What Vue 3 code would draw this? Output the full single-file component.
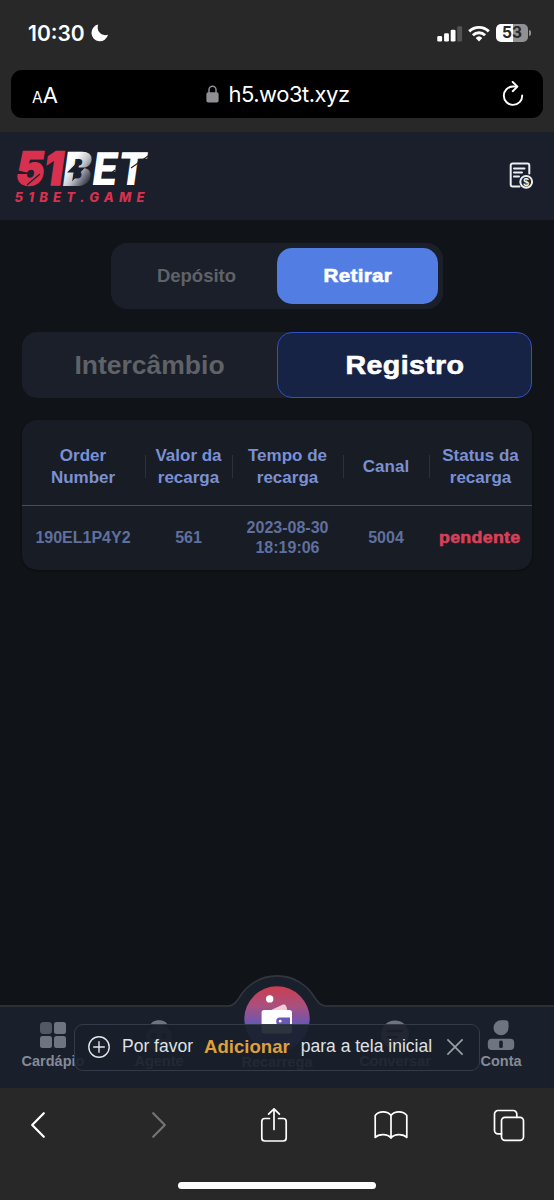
<template>
  <div class="phone">
    <header class="browser-top">
      <div class="status-bar">
        <div class="clock">
          <span>10:30</span>
          <svg width="18" height="18" viewBox="0 0 18 18">
            <path d="M7.2 .6C4.9 6.6 10 12.8 17 10.8A8.4 8.4 0 1 1 7.2 .6Z" fill="#fff" />
          </svg>
        </div>
        <div class="signals">
          <svg width="26" height="17" viewBox="0 0 26 17">
            <rect x="0.3" y="11" width="4.8" height="5.6" rx="1.3" fill="#fff" />
            <rect x="7.1" y="8.3" width="4.8" height="8.3" rx="1.3" fill="#fff" />
            <rect x="13.7" y="4.8" width="4.8" height="11.8" rx="1.3" fill="#fff" />
            <rect x="20.3" y="1.3" width="4.8" height="15.3" rx="1.3" fill="#545454" />
          </svg>
          <svg class="wifi" width="22" height="17" viewBox="0 0 22 17">
            <g fill="none" stroke="#fff" stroke-width="2.9">
              <path d="M1.2 6.4A14 14 0 0 1 20.8 6.4" />
              <path d="M4.9 10.2A8.8 8.8 0 0 1 17.1 10.2" />
            </g>
            <path d="M7.7 12.9A4.8 4.8 0 0 1 14.3 12.9L11 16.5Z" fill="#fff" />
          </svg>
          <div class="battery"><span>53</span></div>
          <i class="battery-tip"></i>
        </div>
      </div>

      <div class="address-bar">
        <div class="text-size"><small>A</small>A</div>
        <div class="url">
          <svg width="13" height="18" viewBox="0 0 13 18">
            <path d="M3 8V4.8a3.5 3.5 0 0 1 7 0V8" fill="none" stroke="#8f8f94" stroke-width="1.5" />
            <rect x="0.4" y="7.3" width="12.2" height="10.3" rx="1.8" fill="#8f8f94" />
          </svg>
          <span>h5.wo3t.xyz</span>
        </div>
        <svg class="reload" width="22" height="26" viewBox="0 0 22 26">
          <g fill="none" stroke="#fff" stroke-width="1.9" stroke-linecap="round" stroke-linejoin="round">
            <path d="M14.6 5.5H11A9.2 9.2 0 1 0 20.2 14.5" />
            <path d="M10.700 1L15.4 5.600L10.7 10.200" />
          </g>
        </svg>
      </div>
    </header>

    <div class="site-header">
      <svg class="logo" width="146" height="80" viewBox="0 -12 146 80">
        <defs>
          <linearGradient id="steel" x1="0.3" y1="0.35" x2="0.75" y2="0.85">
            <stop offset="0" stop-color="#fff" />
            <stop offset="0.45" stop-color="#c3c6cf" />
            <stop offset="1" stop-color="#414553" />
          </linearGradient>
        </defs>
        <g class="logo-main" transform="translate(0 37.5) skewX(-8)">
          <text class="red" x="0.5" y="-0.5" textLength="47" lengthAdjust="spacingAndGlyphs">51</text>
          <text x="47" y="0" textLength="29" lengthAdjust="spacingAndGlyphs" fill="url(#steel)">B</text>
          <text class="thin" x="76.5" y="-0.5" textLength="54" lengthAdjust="spacingAndGlyphs">ET</text>
        </g>
        <path d="M66 11.500L53 24.500H60L58 33.500L71 19.500H64.500Z" fill="#1b1f2b" />
        <path d="M13 37L26 26M117 20L134 8M96 26L101 22" stroke="#1b1f2b" stroke-width="1.1" />
        <text class="logo-sub" x="0.5" y="53.5" textLength="130">51BET.GAME</text>
      </svg>

      <svg class="bill" width="25" height="28" viewBox="0 0 25 28">
        <g fill="none" stroke="#e9f0f3" stroke-width="2" stroke-linecap="round">
          <path d="M10.5 24.5H3.6A1.9 1.9 0 0 1 1.7 22.6V3.4A1.9 1.9 0 0 1 3.6 1.5H18.4A1.9 1.9 0 0 1 20.3 3.4V11.5" />
          <path d="M5 6.6H15.5M5 10.6H13M5 14.4H10" />
          <circle cx="17.2" cy="19.8" r="5.9" />
        </g>
        <text x="17.2" y="23.5" text-anchor="middle" fill="#e9f0f3">$</text>
      </svg>
    </div>

    <main class="page">
      <div class="switcher">
        <button class="switch">Depósito</button>
        <button class="switch active"><span class="heavy">Retirar</span></button>
      </div>

      <div class="tabs">
        <button class="tab">Intercâmbio</button>
        <button class="tab active"><span class="heavy">Registro</span></button>
      </div>

      <section class="records">
        <div class="row head">
          <div v-for="col in columns" :key="col" class="cell">{{ col }}</div>
        </div>
        <div v-for="order in orders" :key="order.id" class="row">
          <div class="cell">{{ order.id }}</div>
          <div class="cell">{{ order.amount }}</div>
          <div class="cell">{{ order.time }}</div>
          <div class="cell">{{ order.channel }}</div>
          <div class="cell status"><span class="heavy">{{ order.status }}</span></div>
        </div>
      </section>
    </main>

    <nav class="bottom-nav">
      <svg class="nav-shape" width="554" height="113" viewBox="0 0 554 113">
        <path
          d="M-2 31H228C234 31 237 26 240 21.5A43.5 43.5 0 0 1 314 21.5C317 26 320 31 326 31H556V115H-2Z"
          fill="#1a202b"
          stroke="#33373d"
          stroke-width="1.6"
        />
      </svg>

      <div class="nav-item">
        <svg width="28" height="30" viewBox="0 0 28 30">
          <rect x="1" y="2" width="12" height="12" rx="3.5" fill="#535962" />
          <rect x="15" y="2" width="12" height="12" rx="2.5" fill="#6f7580" />
          <rect x="1" y="16" width="12" height="12" rx="2.5" fill="#6f7580" />
          <rect x="15" y="16" width="12" height="12" rx="2.5" fill="#6f7580" />
        </svg>
        <span>Cardápio</span>
      </div>
      <div class="nav-item">
        <svg width="30" height="30" viewBox="0 0 30 30">
          <path d="M6.5 5C8 -1.3 22 -1.3 23.5 5Z" fill="#6f7580" />
          <circle cx="15" cy="18" r="13" fill="#4a505b" />
          <circle cx="10" cy="16" r="3" fill="#1a202b" />
          <circle cx="20" cy="16" r="3" fill="#1a202b" />
        </svg>
        <span>Agente</span>
      </div>
      <div class="nav-item main-item">
        <svg width="66" height="66" viewBox="0 0 66 66">
          <defs>
            <linearGradient id="orb" x1="0" y1="0" x2="0" y2="1">
              <stop offset="0" stop-color="#cc3d50" />
              <stop offset="0.3" stop-color="#a9507e" />
              <stop offset="0.58" stop-color="#6857b5" />
              <stop offset="1" stop-color="#3c50a0" />
            </linearGradient>
          </defs>
          <circle cx="33" cy="33" r="32.7" fill="url(#orb)" />
          <circle cx="25.7" cy="12.9" r="3.7" fill="#fff" />
          <path d="M25 25L38 18.9C41 17.7 42.5 19 43.4 25Z" fill="#f4ccd6" />
          <rect x="17.6" y="24" width="30.4" height="23.5" rx="2.5" fill="#fff" />
          <path d="M46 31.6H36A3.8 3.8 0 0 0 36 39.2H46Z" fill="#6857b5" />
          <circle cx="36.2" cy="35.2" r="1.4" fill="#fff" />
        </svg>
        <span>Recarrega</span>
      </div>
      <div class="nav-item">
        <svg width="30" height="30" viewBox="0 0 30 30">
          <circle cx="15" cy="14.5" r="14" fill="#6f7580" />
          <path d="M8 11H22M8 17H17" stroke="#1a202b" stroke-width="2.4" stroke-linecap="round" />
        </svg>
        <span>Conversar</span>
      </div>
      <div class="nav-item">
        <svg width="30" height="30" viewBox="0 0 30 30">
          <circle cx="15" cy="7.7" r="7.5" fill="#6f7580" />
          <rect x="14" y="0.2" width="8.5" height="8.5" rx="3.2" fill="#6f7580" />
          <rect x="1.8" y="18.7" width="26.4" height="11.3" rx="4" fill="#6f7580" />
          <rect x="13.2" y="20.5" width="3.6" height="7.5" rx="1.6" fill="#1a202b" />
        </svg>
        <span>Conta</span>
      </div>

      <div class="toast">
        <svg width="24" height="24" viewBox="0 0 24 24">
          <g fill="none" stroke="#e3e5e8" stroke-width="1.4">
            <circle cx="12" cy="12" r="10.2" />
            <path d="M12 6.2V17.8M6.2 12H17.8" />
          </g>
        </svg>
        <span class="please">Por favor</span>
        <b>Adicionar</b>
        <span class="rest">para a tela inicial</span>
        <svg class="close" width="18" height="18" viewBox="0 0 18 18">
          <path d="M1.4 1.4L16.6 16.6M16.6 1.4L1.4 16.6" stroke="#9a9da4" stroke-width="1.7" />
        </svg>
      </div>
    </nav>

    <footer class="browser-bottom">
      <div class="tools">
        <svg width="16" height="28" viewBox="0 0 16 28">
          <path d="M13.8 2.2L2.2 14L13.8 25.8" class="line bold" />
        </svg>
        <svg width="16" height="28" viewBox="0 0 16 28">
          <path d="M2.2 2.2L13.8 14L2.2 25.8" class="line bold dim" />
        </svg>
        <svg width="28" height="36" viewBox="0 0 28 36">
          <path d="M9.5 11.5H4.8A3 3 0 0 0 1.8 14.5V31A3 3 0 0 0 4.8 34H23.2A3 3 0 0 0 26.2 31V14.5A3 3 0 0 0 23.2 11.5H18.5" class="line" />
          <path d="M14 22.5V2M8.6 7.2L14 1.8L19.4 7.2" class="line" />
        </svg>
        <svg width="34" height="30" viewBox="0 0 34 30">
          <path d="M17 5.5C13.5 .6 4.8 .6 1.2 5.5V27.5C4.8 23.6 13.5 23.6 17 28C20.5 23.6 29.2 23.6 32.8 27.5V5.5C29.2 .6 20.5 .6 17 5.5ZM17 5.5V28" class="line" />
        </svg>
        <svg width="32" height="33" viewBox="0 0 32 33">
          <path d="M8.5 24.8H5A3.5 3.5 0 0 1 1.5 21.3V5A3.5 3.5 0 0 1 5 1.5H20.3A3.5 3.5 0 0 1 23.8 5V8.3" class="line" />
          <rect x="8.5" y="8.3" width="22" height="23" rx="3.5" class="line" />
        </svg>
      </div>
      <div class="home-bar"></div>
    </footer>
  </div>
</template>

<script setup>
import { ref } from 'vue';

const columns = ['Order\nNumber', 'Valor da\nrecarga', 'Tempo de\nrecarga', 'Canal', 'Status da\nrecarga'];

const orders = ref([
  {
    id: '190EL1P4Y2',
    amount: 561,
    time: '2023-08-30 18:19:06',
    channel: '5004',
    status: 'pendente'
  }
]);
</script>

<style>
body {
  background: #101317;
}
</style>

<style scoped>
.phone {
  display: flex;
  flex-direction: column;
  width: 554px;
  height: 1200px;
  overflow: hidden;
  background: #101317;
  font-family: "Liberation Sans", Arial, sans-serif;
}

svg {
  display: block;
  flex: none;
}

button {
  padding: 0;
  border: 0;
  background: none;
  font-family: inherit;
  font-weight: bold;
}

/* browser chrome */
.browser-top {
  height: 132px;
  background: #282828;
  color: #fff;
  font-family: Inter, sans-serif;
}

.status-bar {
  display: flex;
  justify-content: space-between;
  align-items: center;
  height: 70px;
  padding: 0 23px 4px 28px;
  box-sizing: border-box;
}

.clock {
  display: flex;
  align-items: center;
  gap: 6px;
  font-size: 21px;
  font-weight: 600;
}

.signals {
  display: flex;
  align-items: center;
}

.wifi {
  margin: 0 6px 0 5px;
}

.battery {
  width: 32px;
  height: 18px;
  border-radius: 5px;
  background: linear-gradient(90deg, #fff 52%, #919191 52%);
  color: #282828;
  font-size: 15.5px;
  font-weight: 700;
  line-height: 18.5px;
  text-align: center;
}

.battery-tip {
  width: 2px;
  height: 6px;
  margin-left: 1px;
  border-radius: 0 3px 3px 0;
  background: #919191;
}

.address-bar {
  display: flex;
  justify-content: space-between;
  align-items: center;
  height: 48px;
  margin: 0 11px;
  padding: 0 19px 0 21px;
  border-radius: 11px;
  background: #000;
}

.text-size {
  width: 46px;
  padding-top: 2px;
  font-size: 22px;
}

.text-size small {
  font-size: 15.5px;
}

.url {
  display: flex;
  align-items: center;
  gap: 9px;
  font-size: 22px;
  letter-spacing: -0.5px;
}

.reload {
  margin-left: 24px;
}

/* site header */
.site-header {
  display: flex;
  justify-content: space-between;
  align-items: center;
  height: 88px;
  padding: 0 20px 0 14px;
  background: #1b1f2b;
}

.logo-main {
  font-family: Inter, sans-serif;
  font-size: 47px;
  font-weight: 900;
}

.logo-main .red {
  fill: #d8314f;
  stroke: #d8314f;
  stroke-width: 1.6;
  font-size: 46px;
}

.logo-main .thin {
  fill: #fff;
  font-size: 45px;
  font-weight: 800;
}

.logo-sub {
  fill: #d8314f;
  font-family: Inter, sans-serif;
  font-size: 13px;
  font-style: italic;
  font-weight: 800;
}

.bill text {
  font-size: 10.5px;
  font-weight: bold;
}

/* page */
.page {
  flex: 1;
  padding: 23px 22px 0;
}

.heavy {
  display: inline-block;
  letter-spacing: 0.3px;
  transform: scaleX(1.11);
  -webkit-text-stroke: 0.6px currentColor;
}

.switcher {
  display: flex;
  width: 332px;
  height: 66px;
  margin: 0 auto;
  padding: 5px;
  border-radius: 16px;
  background: #1a1f2a;
  box-sizing: border-box;
}

.switch {
  flex: 1;
  border-radius: 15px;
  color: #5f6267;
  font-size: 18.5px;
}

.switch.active {
  background: #527ee4;
  color: #fff;
}

.tabs {
  display: flex;
  height: 66px;
  margin-top: 23px;
  border-radius: 15px;
  background: #1a1f2a;
}

.tab {
  width: 50%;
  border-radius: 15px;
  color: #5f6267;
  font-size: 26.5px;
}

.tab.active {
  border: 1.5px solid #3150c4;
  background: #162344;
  color: #fff;
}

.tab .heavy {
  transform: scaleX(1.08);
}

.records {
  margin-top: 22px;
  border-radius: 15px;
  background: #171c25;
  box-shadow: 0 1px 2px #0b0d10;
}

.row {
  display: grid;
  grid-template-columns: 124px 87px 111px 86px 102px;
  align-items: center;
  height: 64px;
  color: #60709e;
  font-size: 16px;
  font-weight: bold;
  line-height: 20px;
  text-align: center;
}

.cell {
  padding-right: 2px;
}

.row.head {
  height: 85px;
  border-bottom: 1px solid #474c56;
  color: #7b90d2;
  font-size: 17px;
  line-height: 21.5px;
  white-space: pre;
}

.head .cell {
  display: flex;
  justify-content: center;
  align-items: center;
  height: 23px;
  margin-top: 8px;
  padding-right: 1px;
  border-right: 1px solid #2c323c;
}

.head .cell:last-child {
  border-right: 0;
}

.status {
  color: #d93f58;
}

/* bottom navigation */
.bottom-nav {
  position: relative;
  display: grid;
  grid-template-columns: 106px 106px 130px 106px 106px;
  height: 83px;
}

.nav-shape {
  position: absolute;
  left: 0;
  bottom: 0;
}

.nav-item {
  position: relative;
  display: flex;
  flex-direction: column;
  align-items: center;
  justify-content: flex-end;
  gap: 3px;
  height: 65px;
  color: #858a98;
  font-size: 14.5px;
  font-weight: bold;
  line-height: 17px;
}

.main-item {
  gap: 2px;
  height: 66px;
}

.toast {
  position: absolute;
  left: 74px;
  top: 19px;
  display: flex;
  align-items: center;
  width: 406px;
  height: 47px;
  padding: 0 0 2px 12px;
  border: 1.5px solid #363c47;
  border-radius: 9px;
  background: rgba(25, 31, 42, 0.91);
  box-sizing: border-box;
  color: #dfe1e5;
  font-size: 17.5px;
  white-space: nowrap;
}

.please {
  margin-left: 11px;
}

.toast b {
  margin: 0 11px;
  color: #dfa03a;
  font-size: 18.6px;
}

.close {
  margin-left: 14px;
}

/* browser toolbar */
.browser-bottom {
  display: flex;
  flex-direction: column;
  justify-content: space-between;
  align-items: center;
  height: 112px;
  background: #282828;
}

.tools {
  display: grid;
  grid-template-columns: 121px 109px 114px 119px 32px;
  align-items: center;
  height: 74px;
}

.line {
  fill: none;
  stroke: #fff;
  stroke-width: 1.7;
  stroke-linecap: round;
  stroke-linejoin: round;
}

.line.bold {
  stroke-width: 2.2;
}

.line.dim {
  stroke: #747474;
}

.home-bar {
  width: 198px;
  height: 7px;
  margin-bottom: 11px;
  border-radius: 4px;
  background: #fff;
}
</style>
